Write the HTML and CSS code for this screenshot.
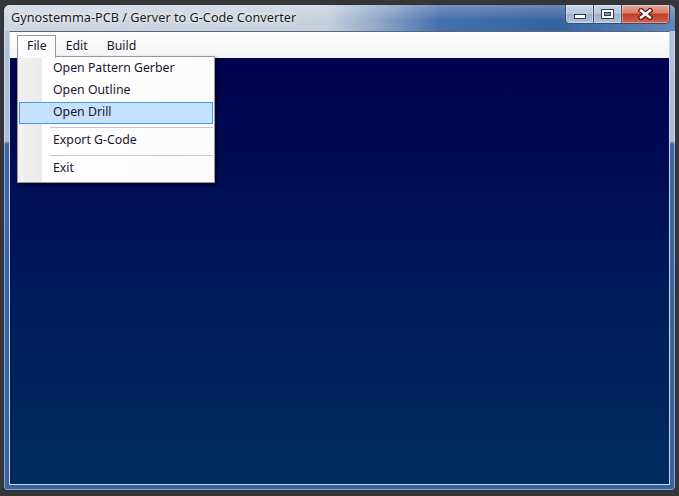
FILE: index.html
```html
<!DOCTYPE html>
<html lang="en">
<head>
    <meta charset="UTF-8">
    <title>Gynostemma-PCB / Gerver to G-Code Converter</title>
    <link rel="stylesheet" href="styles.css">
</head>
<body>
    <div class="window">
        <!-- Title bar with caption buttons -->
        <div class="titlebar">
            <span class="title">Gynostemma-PCB / Gerver to G-Code Converter</span>
            <div class="caption-buttons">
                <div class="caption-btn min-btn">
                    <svg width="12" height="5" viewBox="0 0 12 5"><rect x="0.5" y="0.5" width="11" height="4" fill="#fff" stroke="#2b3950"/></svg>
                </div>
                <div class="caption-btn max-btn">
                    <svg width="13" height="10" viewBox="0 0 13 10"><rect x="0.5" y="0.5" width="12" height="9" fill="#fff" stroke="#2b3950"/><rect x="3.5" y="3.5" width="6" height="3" fill="#8599bb" stroke="#2b3950"/></svg>
                </div>
                <div class="caption-btn close-btn">
                    <svg width="15" height="12" viewBox="0 0 15 12"><path d="M3 2.5 L12 9.5 M12 2.5 L3 9.5" stroke="#4a1a12" stroke-width="5" stroke-linecap="square"/><path d="M3 2.5 L12 9.5 M12 2.5 L3 9.5" stroke="#fff" stroke-width="2.6" stroke-linecap="square"/></svg>
                </div>
            </div>
        </div>

        <div class="client">
            <!-- Menu bar -->
            <div class="menubar">
                <div class="menu-item open">File</div>
                <div class="menu-item">Edit</div>
                <div class="menu-item">Build</div>

                <!-- File dropdown -->
                <div class="dropdown">
                    <div class="dropdown-item">Open Pattern Gerber</div>
                    <div class="dropdown-item">Open Outline</div>
                    <div class="dropdown-item active">Open Drill</div>
                    <div class="separator"></div>
                    <div class="dropdown-item">Export G-Code</div>
                    <div class="separator"></div>
                    <div class="dropdown-item">Exit</div>
                </div>
            </div>

            <!-- Drawing area -->
            <div class="canvas"></div>
        </div>
    </div>
</body>
</html>
```

FILE: styles.css
```css
body {
    margin: 0;
    padding: 4px 3px 0 3px;
    background-color: #363636;
    font-family: "Noto Sans", "DejaVu Sans", sans-serif;
    font-size: 12.3px;
    height: 496px;
    box-sizing: border-box;
    overflow: hidden;
}

.window {
    width: 673px;
    height: 487px;
    box-sizing: border-box;
    border: 1px solid #2a3244;
    border-radius: 7px 7px 4px 4px;
    padding: 0 5px 5px 5px;
    display: flex;
    flex-direction: column;
    background: linear-gradient(to bottom, #b4c3d9 0, #a9bbd5 136px, #3f67a4 139px, #3a629f 100%);
    box-shadow: inset 0 0 0 1px rgba(255, 255, 255, 0.45);
}

.titlebar {
    height: 26px;
    display: flex;
    align-items: flex-start;
    margin: 0 -5px;
    padding: 0 5px;
    border-radius: 6px 6px 0 0;
    background:
        linear-gradient(to bottom, rgba(255, 255, 255, 0.25), rgba(255, 255, 255, 0) 60%),
        linear-gradient(to right, #cdd6e1 0%, #c6d0dc 48%, #8ea6c8 56%, #4470ab 65%, #36629f 82%, #6286bb 100%);
}

.title {
    padding-left: 2px;
    line-height: 25px;
    font-size: 12.7px;
    color: #1a1a1a;
    text-shadow: 0 0 8px rgba(255, 255, 255, 0.95), 0 0 3px rgba(255, 255, 255, 0.9);
}

.caption-buttons {
    margin-left: auto;
    display: flex;
    height: 18px;
    border: 1px solid #3f4d66;
    border-top: none;
    border-radius: 0 0 5px 5px;
    overflow: hidden;
}

.caption-btn {
    display: flex;
    align-items: center;
    justify-content: center;
    box-shadow: inset 0 0 0 1px rgba(255, 255, 255, 0.35);
}

.min-btn {
    width: 27px;
    background: linear-gradient(to bottom, #c9d6e8 0%, #b5c6dc 48%, #9bb1cf 52%, #aec2dd 100%);
}

.min-btn svg {
    margin-top: 5px;
}

.max-btn {
    width: 27px;
    border-left: 1px solid #3f4d66;
    background: linear-gradient(to bottom, #c9d6e8 0%, #b5c6dc 48%, #9bb1cf 52%, #aec2dd 100%);
}

.close-btn {
    width: 47px;
    border-left: 1px solid #3f4d66;
    background: linear-gradient(to bottom, #e6a899 0%, #d8806c 42%, #c23d28 52%, #d2634d 100%);
}

.client {
    flex: 1;
    display: flex;
    flex-direction: column;
    border: 1px solid #c9d6ea;
    border-top-color: #56667f;
}

.menubar {
    position: relative;
    height: 26px;
    box-sizing: border-box;
    padding: 3px 0 0 7px;
    display: flex;
    align-items: flex-start;
    background: linear-gradient(to bottom, #fefefe, #f3f4f6);
}

.menu-item {
    height: 22px;
    line-height: 19px;
    padding: 0 8px 0 9px;
    border: 1px solid transparent;
    border-bottom: none;
    color: #1c1430;
}

.menu-item.open {
    position: relative;
    z-index: 3;
    border-color: #979797;
    background-color: #fcfcfc;
}

.dropdown {
    position: absolute;
    left: 7px;
    top: 24px;
    z-index: 2;
    width: 198px;
    box-sizing: border-box;
    padding: 1px 1px 2px 1px;
    border: 1px solid #979797;
    background: linear-gradient(to right, #f1f1f1 0, #ebebeb 22px, #e3e3e3 23px, #ffffff 24px, #fbfbfb 100%);
    box-shadow: 2px 2px 3px rgba(0, 0, 0, 0.55);
}

.dropdown-item {
    height: 22px;
    line-height: 18px;
    box-sizing: border-box;
    padding-left: 33px;
    border: 1px solid transparent;
    color: #1c1430;
}

.dropdown-item.active {
    background-color: #c6e1fb;
    border-color: #3d9af2;
}

.separator {
    height: 6px;
    box-sizing: border-box;
    margin-left: 31px;
    padding-top: 3px;
}

.separator::before {
    content: "";
    display: block;
    border-top: 1px solid #c6c6c6;
    border-bottom: 1px solid #ffffff;
}

.canvas {
    flex: 1;
    background: linear-gradient(to bottom, #000050 0%, #001a5a 55%, #002d60 100%);
}
```
